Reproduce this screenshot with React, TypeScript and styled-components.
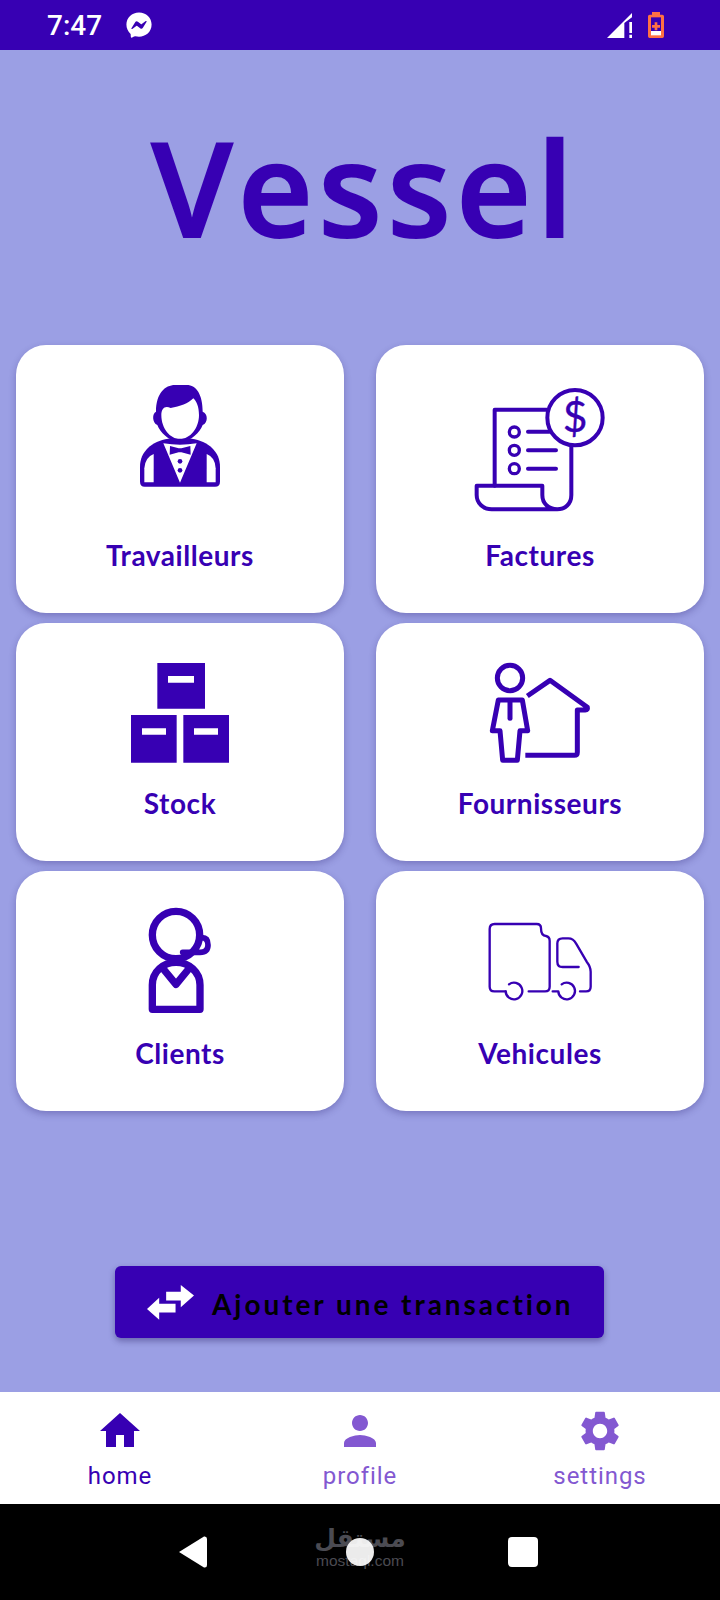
import React from 'react';
import styled, { createGlobalStyle } from 'styled-components';
import { FaFacebookMessenger } from 'react-icons/fa';
import { MdHome, MdPerson, MdSettings } from 'react-icons/md';

const primary = '#3700b3';

const GlobalStyle = createGlobalStyle`
  html, body {
    margin: 0;
    padding: 0;
  }
  body {
    font-family: Lato, "Noto Sans", sans-serif;
  }
`;

const Screen = styled.div`
  width: 720px;
  height: 1600px;
  display: flex;
  flex-direction: column;
  overflow: hidden;
  background: #9b9fe4;
`;

const StatusBar = styled.div`
  height: 50px;
  flex: none;
  display: flex;
  align-items: center;
  padding: 0 56px 0 47px;
  background: ${primary};
  color: #fff;
`;

const Clock = styled.span`
  font-family: Roboto, sans-serif;
  font-size: 28px;
  font-weight: 500;
  margin-right: 24px;
`;

const StatusRight = styled.div`
  margin-left: auto;
  display: flex;
  align-items: center;
  gap: 16px;
`;

const Main = styled.main`
  flex: 1;
  display: flex;
  flex-direction: column;
  align-items: center;
  padding: 0 16px;
`;

const Title = styled.h1`
  height: 295px;
  width: 100%;
  margin: 0;
  padding: 52px 0 0 10px;
  box-sizing: border-box;
  text-align: center;
  font-family: "Open Sans", sans-serif;
  font-size: 130px;
  line-height: 170px;
  font-weight: 600;
  letter-spacing: 5.6px;
  color: ${primary};
  -webkit-text-stroke: 2px ${primary};
`;

const CardGrid = styled.div`
  width: 100%;
  display: grid;
  grid-template-columns: 328px 328px;
  grid-template-rows: 268px 238px 240px;
  column-gap: 32px;
  row-gap: 10px;
`;

const Card = styled.div`
  display: flex;
  flex-direction: column;
  align-items: center;
  justify-content: space-between;
  padding: 34px 0 40px;
  background: #fff;
  border-radius: 30px;
  box-shadow: 0 3px 7px rgba(40, 30, 110, 0.3);
`;

const CardIcon = styled.svg`
  display: block;
  width: 140px;
  height: 124px;
  flex: none;
  overflow: visible;
  color: ${primary};
`;

const CardLabel = styled.span`
  font-size: 28px;
  line-height: 36px;
  font-weight: 700;
  letter-spacing: 0.55px;
  color: ${primary};
`;

const AddButton = styled.button`
  align-self: flex-start;
  width: 489px;
  height: 72px;
  margin: 155px 0 0 99px;
  padding: 0 0 0 32px;
  display: flex;
  align-items: center;
  gap: 18px;
  border: none;
  border-radius: 6px;
  background: ${primary};
  box-shadow: 0 3px 6px rgba(30, 20, 90, 0.4);
  color: #000;
  font-family: Lato, sans-serif;
  font-size: 28px;
  font-weight: 700;
  letter-spacing: 2.95px;
`;

const ButtonText = styled.span`
  position: relative;
  top: 2px;
`;

const BottomNav = styled.nav`
  height: 112px;
  flex: none;
  display: grid;
  grid-template-columns: repeat(3, 1fr);
  background: #fff;
`;

const NavItem = styled.div<{ $active?: boolean }>`
  display: flex;
  flex-direction: column;
  align-items: center;
  padding-top: 15px;
  color: ${(p) => (p.$active ? primary : '#8358d1')};
  font-family: Roboto, sans-serif;
  font-size: 24px;
  line-height: 30px;
  letter-spacing: 0.95px;
  svg {
    display: block;
    margin-bottom: 6px;
  }
`;

const SystemBar = styled.div`
  position: relative;
  height: 96px;
  flex: none;
  display: grid;
  grid-template-columns: 167px 162px 30px;
  align-items: center;
  padding-left: 179px;
  background: #000;
`;

const BackKey = styled.svg`
  display: block;
  width: 28px;
  height: 32px;
`;

const HomeKey = styled.div`
  position: relative;
  z-index: 1;
  width: 28px;
  height: 28px;
  border-radius: 50%;
  background: rgba(255, 255, 255, 0.92);
`;

const RecentKey = styled.div`
  width: 30px;
  height: 30px;
  border-radius: 4px;
  background: #fff;
`;

const Watermark = styled.div`
  position: absolute;
  left: 317px;
  top: 20px;
  width: 86px;
  display: flex;
  flex-direction: column;
  align-items: center;
  color: #4b4b52;
`;

const WatermarkArabic = styled.span`
  font-family: "DejaVu Sans", sans-serif;
  font-size: 25px;
  font-weight: 700;
  line-height: 30px;
`;

const WatermarkLatin = styled.span`
  font-family: "Liberation Sans", sans-serif;
  font-size: 15.5px;
  line-height: 14px;
`;

const TravailleursIcon = () => (
  <CardIcon viewBox="330 117 420 372">
    <path
      fill="currentColor"
      d="M468 215C468 160 495 135 525 135L560 135C590 135 608 165 608 215C624 220 625 248 608 255C600 275 575 305 540 305C505 305 480 275 472 255C456 248 456 220 468 215Z"
    />
    <path
      fill="#fff"
      d="M484 225C484 205 495 195 512 204C540 200 565 190 580 175C590 185 597 200 597 225C597 265 570 297 540 297C510 297 484 265 484 225Z"
    />
    <path
      fill="currentColor"
      d="M434 440Q420 440 420 425L420 380C420 335 455 303 505 296L575 296C625 303 660 335 660 380L660 425Q660 440 645 440Z"
    />
    <path fill="#fff" d="M461 427L461 342Q435 352 433 385L433 427Z" />
    <path fill="#fff" d="M620 427L620 342Q646 352 647 385L647 427Z" />
    <path fill="#fff" d="M490 310Q540 318 590 310L540 428Z" />
    <path fill="currentColor" d="M510 318L536 325L544 325L571 318L572 344L544 337L536 337L509 344Z" />
    <circle cx="540" cy="364" r="7" fill="currentColor" />
    <circle cx="540" cy="391" r="7" fill="currentColor" />
  </CardIcon>
);

const FacturesIcon = () => (
  <CardIcon viewBox="330 117 420 372" fill="none" stroke="currentColor" strokeWidth="12" strokeLinecap="round" strokeLinejoin="round">
    <circle cx="645" cy="233" r="83" />
    <path d="M404 437L404 209L560 209" />
    <path d="M634 320L634 465C634 492 615 508 592 508C565 508 547 490 547 465L547 437L350 437L350 465C350 490 370 508 395 508L592 508" />
    <circle cx="463" cy="276" r="15" strokeWidth="10" />
    <circle cx="463" cy="331" r="15" strokeWidth="10" />
    <circle cx="463" cy="386" r="15" strokeWidth="10" />
    <path d="M504 275L568 275M504 331L588 331M504 386L588 386" />
    <text x="645" y="277" textAnchor="middle" fontSize="128" fontFamily="Lato, sans-serif" fill="currentColor" stroke="currentColor" strokeWidth="1">
      $
    </text>
  </CardIcon>
);

const StockIcon = () => (
  <CardIcon viewBox="330 126 420 372">
    <path
      fill="currentColor"
      fillRule="evenodd"
      d="M472 144H615V281H472ZM504 183V203H582V183ZM393 300H530V443H393ZM426 340V359H498V340ZM550 300H687V443H550ZM582 340V359H654V340Z"
    />
  </CardIcon>
);

const FournisseursIcon = () => (
  <CardIcon viewBox="330 126 420 372" fill="none" stroke="currentColor" strokeWidth="15" strokeLinejoin="round">
    <circle cx="450" cy="189" r="38" />
    <path d="M415 255L487 255L503 347L480 347L472 436L428 436L420 347L397 347Z" />
    <path d="M450 258L450 310" strokeLinecap="round" />
    <path d="M502 243L570 196L682 277Q684 285 676 285L652 285L652 412Q652 421 643 421L496 421" />
  </CardIcon>
);

const ClientsIcon = () => (
  <CardIcon viewBox="330 120 420 372" fill="none" stroke="currentColor" strokeWidth="22" strokeLinecap="round" strokeLinejoin="round">
    <circle cx="528" cy="210" r="71" />
    <path d="M457 433L457 360C457 320 490 292 528 292C566 292 600 320 600 360L600 433Z" />
    <path d="M490 312L528 358L566 312" />
    <path d="M606 218Q624 218 624 240Q624 262 600 262L548 262" strokeWidth="17" />
  </CardIcon>
);

const VehiculesIcon = () => (
  <CardIcon viewBox="330 120 420 372" fill="none" stroke="currentColor" strokeWidth="7" strokeLinecap="round" strokeLinejoin="round">
    <path d="M437 379L403 379Q389 379 389 365L389 192Q389 177 404 177L530 177Q543 177 543 190Q543 213 558 213Q569 215 569 228L569 365Q569 379 555 379L506 379" />
    <path d="M447 358A25 25 0 1 1 437 379" />
    <path d="M605 358A25 25 0 1 1 595 379L578 379" />
    <path d="M656 306L608 306Q592 306 592 290L592 235Q592 220 608 220L625 220Q640 220 648 235L680 290Q692 305 692 320L692 365Q692 379 678 379L660 379" />
  </CardIcon>
);

const SwapIcon = () => (
  <svg width="47" height="35" viewBox="165 104 135 104" preserveAspectRatio="none">
    <path fill="#fff" d="M220 124L262 124L262 104L300 135L262 170L262 150L220 150Z" />
    <path fill="#fff" d="M247 160L247 186L200 186L200 207L165 175L200 142L200 160Z" />
  </svg>
);

const SignalIcon = () => (
  <svg width="25" height="25" viewBox="80 45 75 75">
    <path fill="#fff" d="M80 120L132 120L132 75L155 58L155 45Z" />
    <path fill="#fff" d="M147 72H155V105H147ZM147 110H155V120H147Z" />
  </svg>
);

const BatteryIcon = () => (
  <svg width="16" height="26" viewBox="204 42 48 78">
    <path fill="#ff7043" d="M216 42H240V50H247Q252 50 252 55V115Q252 120 247 120H209Q204 120 204 115V55Q204 50 209 50H216Z" />
    <rect x="213" y="58" width="30" height="41" fill={primary} />
    <rect x="213" y="99" width="30" height="13" fill="#fff" />
    <path fill="#ff7043" d="M224 73H232V81H240V89H232V97H224V89H216V81H224Z" />
  </svg>
);

const items = [
  { label: 'Travailleurs', Icon: TravailleursIcon },
  { label: 'Factures', Icon: FacturesIcon },
  { label: 'Stock', Icon: StockIcon },
  { label: 'Fournisseurs', Icon: FournisseursIcon },
  { label: 'Clients', Icon: ClientsIcon },
  { label: 'Vehicules', Icon: VehiculesIcon },
];

const App = () => {
  return (
    <Screen>
      <GlobalStyle />
      <StatusBar>
        <Clock>7:47</Clock>
        <FaFacebookMessenger size={26} />
        <StatusRight>
          <SignalIcon />
          <BatteryIcon />
        </StatusRight>
      </StatusBar>

      <Main>
        <Title>Vessel</Title>
        <CardGrid>
          {items.map(({ label, Icon }) => (
            <Card key={label}>
              <Icon />
              <CardLabel>{label}</CardLabel>
            </Card>
          ))}
        </CardGrid>
        <AddButton>
          <SwapIcon />
          <ButtonText>Ajouter une transaction</ButtonText>
        </AddButton>
      </Main>

      <BottomNav>
        <NavItem $active>
          <MdHome size={48} />
          home
        </NavItem>
        <NavItem>
          <MdPerson size={48} />
          profile
        </NavItem>
        <NavItem>
          <MdSettings size={48} />
          settings
        </NavItem>
      </BottomNav>

      <SystemBar>
        <Watermark>
          <WatermarkArabic>مستقل</WatermarkArabic>
          <WatermarkLatin>mostaql.com</WatermarkLatin>
        </Watermark>
        <BackKey viewBox="0 0 28 32">
          <path fill="#fff" d="M0 16L25 0.5Q28 0 28 3V29Q28 32 25 31.5Z" />
        </BackKey>
        <HomeKey />
        <RecentKey />
      </SystemBar>
    </Screen>
  );
};

export default App;
